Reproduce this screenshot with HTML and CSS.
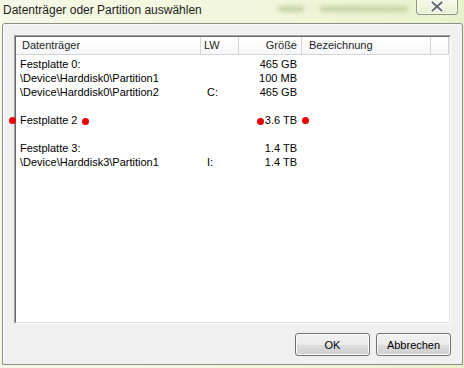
FILE: index.html
```html
<!DOCTYPE html>
<html lang="de">
<head>
    <meta charset="UTF-8">
    <title>Datenträger oder Partition auswählen</title>
    <link rel="stylesheet" href="styles.css">
</head>
<body>
    <div class="window">
        <div class="titlebar">
            <span class="title">Datenträger oder Partition auswählen</span>
            <div class="blur">
                <span class="smudge s1"></span>
                <span class="smudge s2"></span>
            </div>
            <div class="close">
                <svg width="14" height="11" viewBox="0 0 14 11">
                    <path d="M2.5 1.5 L11.5 9.5 M11.5 1.5 L2.5 9.5" stroke="#fff" stroke-width="4.5" stroke-linecap="round"/>
                    <path d="M2.5 1.5 L11.5 9.5 M11.5 1.5 L2.5 9.5" stroke="#6b7072" stroke-width="2.2" stroke-linecap="round"/>
                </svg>
            </div>
        </div>

        <div class="client">
            <div class="list">
                <div class="list-inner">
                    <div class="row header">
                        <div class="cell c-name">Datenträger</div>
                        <div class="cell c-lw">LW</div>
                        <div class="cell c-size">Größe</div>
                        <div class="cell c-label">Bezeichnung</div>
                        <div class="cell c-fill"></div>
                    </div>
                    <div class="rows">
                        <div class="row">
                            <div class="cell c-name">Festplatte 0:</div>
                            <div class="cell c-lw"></div>
                            <div class="cell c-size">465 GB</div>
                        </div>
                        <div class="row">
                            <div class="cell c-name">\Device\Harddisk0\Partition1</div>
                            <div class="cell c-lw"></div>
                            <div class="cell c-size">100 MB</div>
                        </div>
                        <div class="row">
                            <div class="cell c-name">\Device\Harddisk0\Partition2</div>
                            <div class="cell c-lw">C:</div>
                            <div class="cell c-size">465 GB</div>
                        </div>
                        <div class="row"></div>
                        <div class="row">
                            <div class="cell c-name"><span class="dot dot-lead"></span>Festplatte 2<span class="dot dot-after"></span></div>
                            <div class="cell c-lw"></div>
                            <div class="cell c-size"><span class="dot dot-before"></span>3.6 TB<span class="dot dot-trail"></span></div>
                        </div>
                        <div class="row"></div>
                        <div class="row">
                            <div class="cell c-name">Festplatte 3:</div>
                            <div class="cell c-lw"></div>
                            <div class="cell c-size">1.4 TB</div>
                        </div>
                        <div class="row">
                            <div class="cell c-name">\Device\Harddisk3\Partition1</div>
                            <div class="cell c-lw">I:</div>
                            <div class="cell c-size">1.4 TB</div>
                        </div>
                    </div>
                </div>
            </div>

            <div class="buttons">
                <button class="btn">OK</button>
                <button class="btn">Abbrechen</button>
            </div>
        </div>
    </div>
</body>
</html>
```

FILE: styles.css
```css
html, body {
    margin: 0;
    padding: 0;
}
body {
    font-family: "Segoe UI", "Liberation Sans", Arial, sans-serif;
    font-size: 11px;
    color: #000;
    width: 464px;
    height: 368px;
    overflow: hidden;
}
.window {
    width: 464px;
    height: 368px;
    background: linear-gradient(90deg, #f6f8e6 0%, #f2f6dc 55%, #e9f1cc 100%);
    display: flex;
    flex-direction: column;
}
.titlebar {
    height: 23px;
    display: flex;
    align-items: flex-start;
    position: relative;
}
.title {
    font-size: 12px;
    color: #1c1c1c;
    margin: 2px 0 0 3px;
    line-height: 16px;
}
.blur {
    position: absolute;
    left: 270px;
    top: 4px;
    width: 145px;
    height: 10px;
    filter: blur(2px);
}
.smudge {
    position: absolute;
    top: 2px;
    height: 6px;
    background: #c6d4a4;
    border-radius: 3px;
}
.s1 {
    left: 8px;
    width: 26px;
}
.s2 {
    left: 50px;
    width: 88px;
}
.close {
    position: absolute;
    left: 416px;
    top: -1px;
    width: 40px;
    height: 15px;
    border: 1px solid #8e977e;
    border-top: none;
    border-radius: 0 0 4px 4px;
    background: linear-gradient(#f7faec, #e7efcf);
    box-shadow: inset 0 0 0 1px rgba(255, 255, 255, 0.7);
    display: flex;
    align-items: center;
    justify-content: center;
}
.client {
    flex: 1;
    margin: 0 1px 3px 2px;
    border: 1px solid #8b8f86;
    border-radius: 3px 3px 0 0;
    background: #f0f0f0;
    box-shadow: inset 1px 1px 0 #fbfbfb;
    padding: 11px 11px 8px 11px;
    display: flex;
    flex-direction: column;
}
.list {
    flex: 1;
    border: 1px solid;
    border-color: #a0a0a0 #ffffff #ffffff #a0a0a0;
    display: flex;
    min-height: 0;
}
.list-inner {
    flex: 1;
    border: 1px solid;
    border-color: #696969 #e3e3e3 #e3e3e3 #696969;
    background: #fff;
}
.row {
    display: grid;
    grid-template-columns: 185px 38px 63px 129px 1fr;
    height: 14px;
    line-height: 14px;
    white-space: nowrap;
}
.header {
    height: 17px;
    line-height: 17px;
    background: linear-gradient(#ffffff, #f6f7f9);
    border-bottom: 1px solid #d5d5d5;
    color: #1e1e1e;
}
.header .cell {
    border-right: 1px solid #d5d5d5;
    padding-left: 6px;
}
.header .c-lw {
    padding-left: 3px;
}
.header .c-size {
    padding-right: 4px;
}
.header .c-label {
    padding-left: 7px;
}
.rows {
    padding-top: 2px;
}
.cell {
    padding-left: 4px;
}
.c-lw {
    padding-left: 6px;
}
.c-size {
    text-align: right;
    padding-right: 5px;
    padding-left: 0;
    position: relative;
}
.c-name {
    position: relative;
}
.dot {
    display: inline-block;
    width: 7px;
    height: 7px;
    border-radius: 50%;
    background: #e8000b;
    vertical-align: -1px;
}
.dot-lead {
    position: absolute;
    left: -7px;
    top: 4px;
}
.dot-after {
    margin-left: 5px;
}
.dot-before {
    margin-right: 1px;
}
.dot-trail {
    position: absolute;
    right: -7px;
    top: 4px;
}
.buttons {
    display: flex;
    justify-content: flex-end;
    gap: 6px;
    margin-top: 9px;
}
.btn {
    width: 75px;
    height: 23px;
    font-family: inherit;
    font-size: 11px;
    font-weight: normal;
    color: #000;
    border: 1px solid #707070;
    border-radius: 3px;
    background: linear-gradient(#f2f2f2 0%, #ebebeb 50%, #dddddd 51%, #cfcfcf 100%);
    box-shadow: inset 0 0 0 1px #fcfcfc;
    padding: 0;
}
```
